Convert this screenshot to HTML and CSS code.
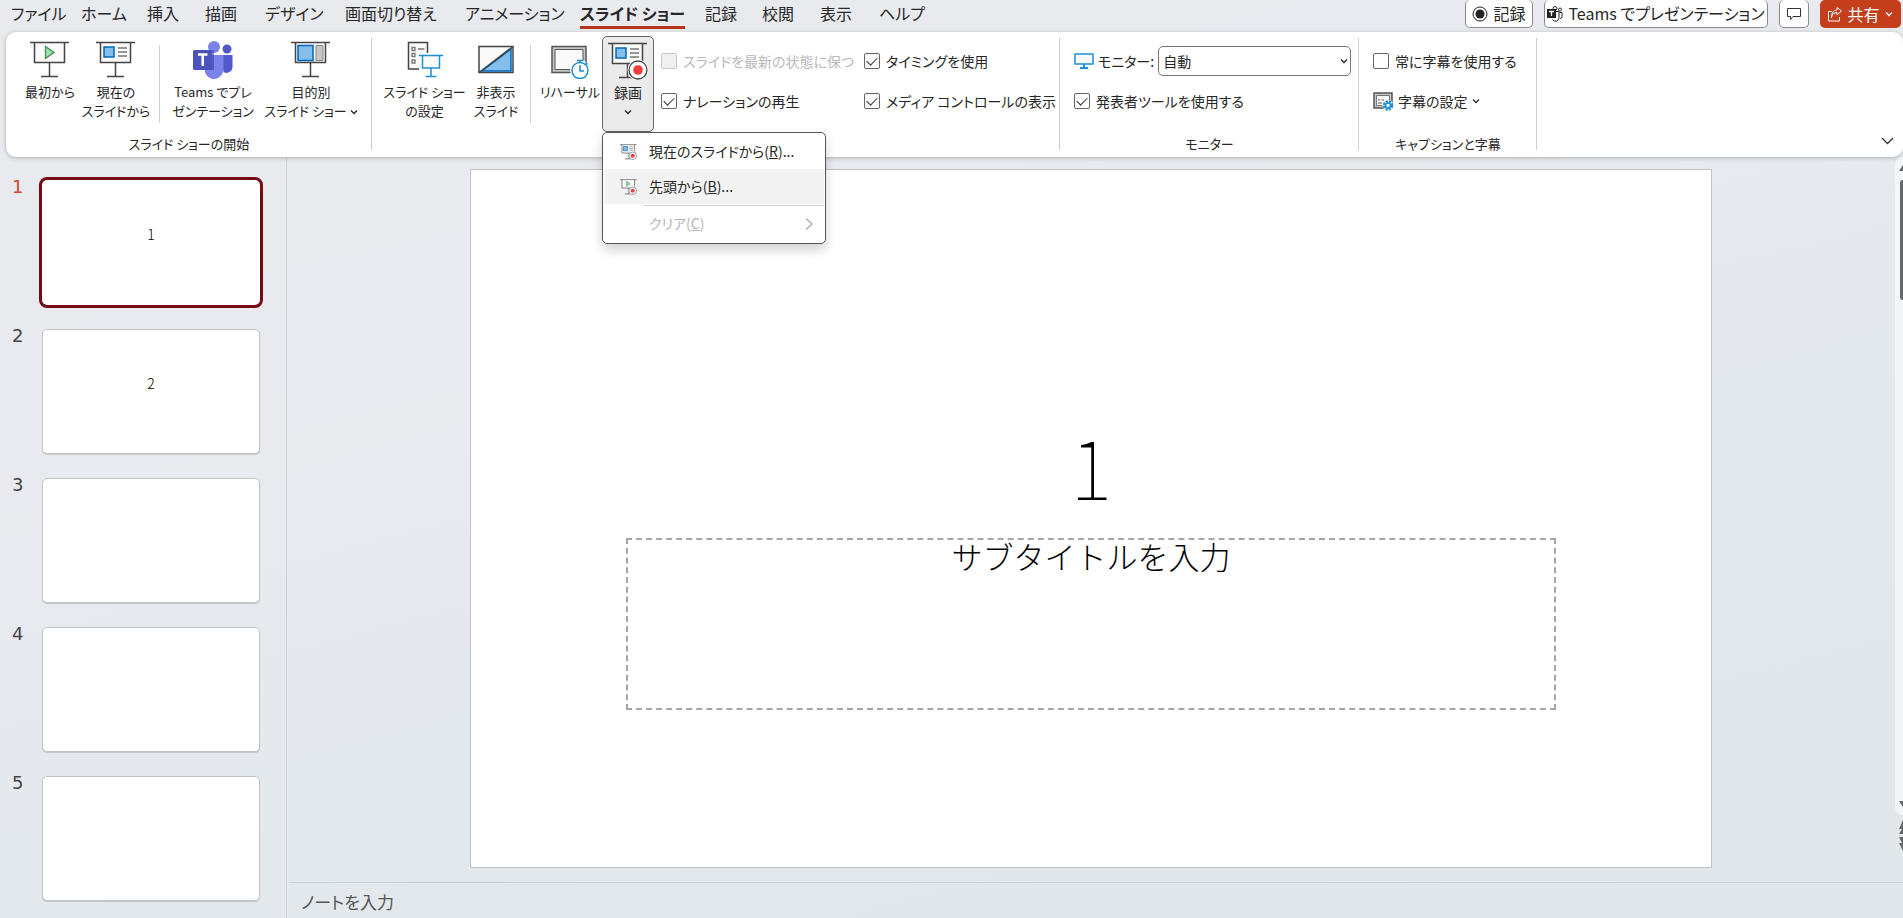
FILE: index.html
```
<!DOCTYPE html>
<html lang="ja">
<head>
    <meta charset="UTF-8">
    <meta name="viewport" content="width=device-width, initial-scale=1.0">
    <title>PowerPoint</title>
    <link rel="stylesheet" href="styles.css">
</head>
<body>
    <svg class="defs" aria-hidden="true">
        <symbol id="chevron" viewBox="0 0 8 8"><path d="M1 2.5l3 3 3-3" fill="none" stroke="currentColor" stroke-width="1.3"/></symbol>
        <symbol id="screen" viewBox="0 0 40 38">
            <path d="M5 2h30v20H5z" fill="#fafafa"/>
            <path d="M0 1.5h39M4.500 2v19.500h30V2M19.500 22v13.500M11 35.500h17" fill="none" stroke="#444" stroke-width="1.500"/>
        </symbol>
        <symbol id="content" viewBox="0 0 40 38">
            <path d="M8 6h10v10H8z" fill="#83beec" stroke="#0067b8" stroke-width="1.500"/>
            <path d="M22 7h9M22 11h9M22 15h9" stroke="#777" stroke-width="1.500"/>
        </symbol>
        <symbol id="play" viewBox="0 0 40 38"><path d="M15.500 5.500v12l8.500-6z" fill="#a1dbae" stroke="#3a9254" stroke-width="1.300"/></symbol>
        <symbol id="rec" viewBox="0 0 40 38">
            <circle cx="30" cy="28" r="10.500" fill="#fff"/>
            <circle cx="30" cy="28" r="9" fill="#fff" stroke="#444" stroke-width="1.300"/>
            <circle cx="30" cy="28" r="4.800" fill="#ee3d3b"/>
        </symbol>
    </svg>

    <header class="topbar">
        <nav class="tabs">
            <a href="#">ファイル</a>
            <a href="#">ホーム</a>
            <a href="#">挿入</a>
            <a href="#">描画</a>
            <a href="#">デザイン</a>
            <a href="#">画面切り替え</a>
            <a href="#">アニメーション</a>
            <a href="#" class="active">スライド ショー</a>
            <a href="#">記録</a>
            <a href="#">校閲</a>
            <a href="#">表示</a>
            <a href="#">ヘルプ</a>
        </nav>
        <div class="actions">
            <button class="record">
                <svg width="16" height="16" viewBox="0 0 16 16"><circle cx="8" cy="8" r="7" fill="none" stroke="#222"/><circle cx="8" cy="8" r="4.500" fill="#222"/></svg>
                記録
            </button>
            <button class="present">
                <svg width="16" height="16" viewBox="0 0 16 16">
                    <path d="M8.500 5.500h3.500v6a3.500 3.500 0 0 1-6.500 2M12.500 6.500H15v4a2 2 0 0 1-2 2" fill="none" stroke="#222"/>
                    <circle cx="8" cy="2.500" r="2" fill="none" stroke="#222"/><circle cx="13" cy="3.500" r="1.500" fill="none" stroke="#222"/>
                    <path d="M0 3h9v9H0z" fill="#222"/><path d="M2 5.500h5M4.500 5.500V10" stroke="#fff" stroke-width="1.300"/>
                </svg>
                Teams でプレゼンテーション
            </button>
            <button class="comment" aria-label="コメント">
                <svg width="14" height="14" viewBox="0 0 14 14"><path d="M.5 1.500h13v8H6L3.500 12.500v-3h-3z" fill="none" stroke="#333"/></svg>
            </button>
            <button class="share">
                <svg width="14" height="15" viewBox="0 0 14 15"><path d="M4 4.500H.5v9.500h11v-4M3.500 10.500c.5-3.500 2.500-5 5.500-5v2.500l4.500-4L9 .500V3C5.500 3 3.500 6 3.500 10.500z" fill="none" stroke="#fff"/></svg>
                共有
                <svg class="chev" width="8" height="8"><use href="#chevron"/></svg>
            </button>
        </div>
    </header>

    <section class="ribbon">
        <div class="group group-start">
            <div class="tools">
                <button class="tool">
                    <svg width="40" height="38"><use href="#screen"/><use href="#play"/></svg>
                    <span>最初から</span>
                </button>
                <button class="tool">
                    <svg width="40" height="38"><use href="#screen"/><use href="#content"/></svg>
                    <span>現在の<br>スライドから</span>
                </button>
                <div class="sep"></div>
                <button class="tool">
                    <svg width="40" height="38" viewBox="0 0 40 38">
                        <circle cx="34" cy="8" r="4.500" fill="#5059c9"/><path d="M28 14h11.500v11a6 6 0 0 1-9 6z" fill="#5059c9"/>
                        <circle cx="21" cy="6" r="6" fill="#7b83eb"/><path d="M12 14h18.500v13a9.500 10 0 0 1-19 2z" fill="#7b83eb"/>
                        <path d="M15 9h6v20h-9z" fill="#3d45a8" opacity=".6"/>
                        <rect y="9" width="19" height="20" rx="1.500" fill="#4b53bc"/>
                        <path d="M5 13.500h9.500M9.700 13.500V25" stroke="#fff" stroke-width="2.500"/>
                    </svg>
                    <span>Teams でプレ<br>ゼンテーション</span>
                </button>
                <button class="tool">
                    <svg width="40" height="38">
                        <use href="#screen"/>
                        <path d="M7 4.500h15v15H7z" fill="#83beec" stroke="#0067b8" stroke-width="1.500"/>
                        <path d="M25 4.500h7v15h-7z" fill="#c8c6c4" stroke="#888"/>
                    </svg>
                    <span>目的別<br>スライド ショー <svg class="chev" width="8" height="8"><use href="#chevron"/></svg></span>
                </button>
            </div>
            <h2>スライド ショーの開始</h2>
        </div>

        <div class="group group-setup">
            <div class="tools">
                <button class="tool">
                    <svg width="40" height="38" viewBox="0 0 40 38">
                        <path d="M3.500 1.500h19V28h-19z" fill="#fafafa"/>
                        <path d="M22.500 12V1.500h-19V28H14" fill="none" stroke="#444" stroke-width="1.500"/>
                        <path d="M7 6.500h3v3H7zM7 12.500h3v3H7zM7 19h3v3H7zM13 8h6.500" fill="none" stroke="#777" stroke-width="1.300"/>
                        <path d="M14 14h24v23H14z" fill="#fff"/>
                        <path d="M14 14.500h24M17.500 14.500v12.500h17V14.500M26 27v8.500M20.500 35.500h11" fill="#fafafa" stroke="#1e8fd6" stroke-width="1.500"/>
                    </svg>
                    <span>スライド ショー<br>の設定</span>
                </button>
                <button class="tool">
                    <svg width="40" height="38" viewBox="0 0 40 38">
                        <path d="M3 5.500h34v26H3z" fill="#fafafa" stroke="#444" stroke-width="1.500"/>
                        <path d="M6 30L35 8v22z" fill="#83beec" stroke="#0067b8" stroke-width="1.500"/>
                        <path d="M3 31.500L37 5.500" stroke="#444" stroke-width="1.500"/>
                    </svg>
                    <span>非表示<br>スライド</span>
                </button>
                <div class="sep"></div>
                <button class="tool">
                    <svg width="40" height="38" viewBox="0 0 40 38">
                        <path d="M2 5.500h34v26H2z" fill="#c8c6c4" stroke="#555" stroke-width="1.500"/>
                        <path d="M5 8.500h28v20H5z" fill="#fafafa" stroke="#555"/>
                        <circle cx="30" cy="29" r="10" fill="#fff"/>
                        <circle cx="30" cy="29.500" r="8" fill="#fff" stroke="#1e8fd6" stroke-width="1.500"/>
                        <path d="M30 24v6h4M27 19.500h6M30 19.500V22M35.500 21.500l2 2" fill="none" stroke="#1e8fd6" stroke-width="1.500"/>
                    </svg>
                    <span>リハーサル</span>
                </button>
                <div class="menu-holder">
                    <button class="tool open">
                        <svg width="40" height="38"><use href="#screen"/><use href="#content"/><use href="#rec"/></svg>
                        <span>録画</span>
                        <svg class="chev" width="8" height="8"><use href="#chevron"/></svg>
                    </button>
                    <div class="menu">
                        <button>
                            <svg width="17" height="16" viewBox="0 0 40 38"><use href="#screen"/><use href="#content"/><use href="#rec"/></svg>
                            <span>現在のスライドから(<u>R</u>)...</span>
                        </button>
                        <button class="hover">
                            <svg width="17" height="16" viewBox="0 0 40 38"><use href="#screen"/><use href="#play"/><use href="#rec"/></svg>
                            <span>先頭から(<u>B</u>)...</span>
                        </button>
                        <hr>
                        <button disabled>
                            <span>クリア(<u>C</u>)</span>
                            <svg class="arrow" width="8" height="12" viewBox="0 0 8 12"><path d="M1 .500l6 5.500-6 5.500" fill="none" stroke="#aaa" stroke-width="1.300"/></svg>
                        </button>
                    </div>
                </div>
                <div class="checks">
                    <label class="off"><input type="checkbox" disabled>スライドを最新の状態に保つ</label>
                    <label><input type="checkbox" checked>タイミングを使用</label>
                    <label><input type="checkbox" checked>ナレーションの再生</label>
                    <label><input type="checkbox" checked>メディア コントロールの表示</label>
                </div>
            </div>
        </div>

        <div class="group group-monitor">
            <div class="rows">
                <div class="row">
                    <svg width="20" height="16" viewBox="0 0 20 16"><path d="M1 1h18v10H1z" fill="#fafafa" stroke="#1e8fd6" stroke-width="1.500"/><path d="M10 11v4M6 15h8" stroke="#1e8fd6" stroke-width="2"/></svg>
                    <label for="monitor">モニター:</label>
                    <div class="select">
                        <select id="monitor"><option>自動</option></select>
                        <svg class="chev" width="8" height="8"><use href="#chevron"/></svg>
                    </div>
                </div>
                <label><input type="checkbox" checked>発表者ツールを使用する</label>
            </div>
            <h2>モニター</h2>
        </div>

        <div class="group group-caption">
            <div class="rows">
                <label><input type="checkbox">常に字幕を使用する</label>
                <button class="row">
                    <svg width="21" height="19" viewBox="0 0 21 19">
                        <path d="M1 1h18v15H1z" fill="#c8c6c4" stroke="#555" stroke-width="1.500"/><path d="M3.500 3.500h13v10h-13z" fill="#fafafa" stroke="#777"/>
                        <path d="M5 8h2M8.500 8H11M5 11h4" stroke="#555"/>
                        <circle cx="15" cy="13.500" r="5.500" fill="#fff"/>
                        <circle cx="15" cy="13.500" r="4" fill="none" stroke="#1e8fd6" stroke-width="2.500" stroke-dasharray="2.200 1"/>
                        <circle cx="15" cy="13.500" r="2.500" fill="#fff" stroke="#1e8fd6" stroke-width="1.500"/>
                    </svg>
                    字幕の設定
                    <svg class="chev" width="8" height="8"><use href="#chevron"/></svg>
                </button>
            </div>
            <h2>キャプションと字幕</h2>
        </div>

        <button class="collapse" aria-label="リボンを折りたたむ">
            <svg width="13" height="8" viewBox="0 0 13 8"><path d="M1 1l5.500 5.500L12 1" fill="none" stroke="#333" stroke-width="1.300"/></svg>
        </button>
    </section>

    <main class="workspace">
        <aside class="slides">
            <div class="slide-item selected"><span>1</span><div class="thumb">1</div></div>
            <div class="slide-item"><span>2</span><div class="thumb">2</div></div>
            <div class="slide-item"><span>3</span><div class="thumb"></div></div>
            <div class="slide-item"><span>4</span><div class="thumb"></div></div>
            <div class="slide-item"><span>5</span><div class="thumb"></div></div>
        </aside>
        <div class="editor">
            <div class="stage">
                <div class="canvas">
                    <div class="slide">
                        <h1>1</h1>
                        <div class="subtitle">サブタイトルを入力</div>
                    </div>
                </div>
                <div class="scroll">
                    <div class="track">
                        <svg width="8" height="8" viewBox="0 0 8 8"><path d="M4 7l4-6v6z" fill="#666"/></svg>
                        <div class="bar"></div>
                        <svg width="8" height="8" viewBox="0 0 8 8"><path d="M4 1h4v6z" fill="#666"/></svg>
                    </div>
                    <svg width="8" height="32" viewBox="0 0 8 32"><path d="M8 0v14H4l3-5H4zM4 17h4v14l-4-8h3z" fill="#666"/></svg>
                </div>
            </div>
            <div class="notes">ノートを入力</div>
        </div>
    </main>
</body>
</html>
```
FILE: styles.css
```
*{
    margin: 0;
    padding: 0;
    box-sizing: border-box;
}
body{
    display: flex;
    flex-direction: column;
    height: 100vh;
    overflow: hidden;
    background: linear-gradient(165deg, #e8eaee 0%, #e9eaef 30%, #e4e9ed 60%, #e0e6ea 100%);
    color: #262626;
    font-family: "Noto Sans CJK JP", sans-serif;
    font-feature-settings: "palt";
    font-size: 14px;
    line-height: 19px;
}
button, select{
    font: inherit;
    font-feature-settings: inherit;
    color: inherit;
    background: none;
    border: 0;
}
svg{
    flex: none;
}
.defs{
    position: absolute;
    width: 0;
    height: 0;
}

/* tabs */
.topbar{
    display: flex;
    justify-content: space-between;
    height: 32px;
    font-size: 16px;
    padding: 0 2px 0 11px;
}
.tabs{
    display: grid;
    grid-template-columns: 70px 66px 58px 60px 80px 120px 115px 125px 57px 58px 59px auto;
    justify-items: start;
    align-items: start;
}
.tabs a{
    color: inherit;
    text-decoration: none;
    white-space: nowrap;
    line-height: 26px;
}
.tabs .active{
    font-weight: bold;
    border-bottom: 3px solid #b83518;
}
.actions{
    display: flex;
    gap: 11px;
    height: 28px;
}
.actions button{
    display: flex;
    align-items: center;
    justify-content: center;
    gap: 5px;
    background: #fff;
    border: 1px solid #8a8a8a;
    border-top: 0;
    border-radius: 5px;
    white-space: nowrap;
}
.actions .record{
    width: 68px;
}
.actions .present{
    width: 224px;
}
.actions .comment{
    width: 30px;
}
.actions .share{
    width: 81px;
    background: #c43e1c;
    border: 0;
    color: #fff;
}

/* ribbon */
.ribbon{
    position: relative;
    z-index: 1;
    display: flex;
    height: 125px;
    margin-left: 6px;
    background: #fff;
    border-radius: 10px;
    box-shadow: 0 1px 4px rgba(0, 0, 0, 0.25);
}
.group{
    display: flex;
    flex-direction: column;
    justify-content: space-between;
    position: relative;
    padding-bottom: 4px;
}
.group::after{
    content: "";
    position: absolute;
    right: 0;
    top: 6px;
    bottom: 7px;
    width: 1px;
    background: #d0d0d0;
}
.group h2{
    font-size: 13px;
    font-weight: normal;
    text-align: center;
}
.group-start{
    width: 366px;
}
.group-setup{
    width: 688px;
}
.group-monitor{
    width: 299px;
}
.group-caption{
    width: 178px;
}
.tools{
    display: grid;
    justify-items: center;
    align-items: start;
}
.group-start .tools{
    grid-template-columns: 70px 62px 24px 84px 112px;
    padding-left: 9px;
}
.group-setup .tools{
    grid-template-columns: 105px 38px 30px 50px 66px 1fr;
    justify-content: start;
}
.tool{
    display: flex;
    flex-direction: column;
    align-items: center;
    gap: 3px;
    padding-top: 9px;
    font-size: 13px;
    white-space: nowrap;
}
.sep{
    width: 1px;
    height: 78px;
    margin-top: 13px;
    background: #d0d0d0;
}
.menu-holder{
    position: relative;
    padding-top: 4px;
}
.tool.open{
    width: 52px;
    height: 96px;
    padding-top: 5px;
    background: #ebebeb;
    border: 1px solid #666;
    border-radius: 5px;
    font-size: 14px;
}
.open .chev{
    margin-top: 3px;
}
.menu{
    position: absolute;
    left: 0;
    top: 100px;
    width: 224px;
    height: 112px;
    padding: 1px;
    background: #fff;
    border: 1px solid #555;
    border-radius: 5px;
    box-shadow: 0 6px 12px rgba(0, 0, 0, 0.18);
}
.menu button{
    display: flex;
    align-items: center;
    gap: 12px;
    width: 100%;
    height: 35px;
    padding-left: 16px;
    white-space: nowrap;
}
.menu .hover{
    background: #f3f3f3;
}
.menu hr{
    margin: 1px 0 0 40px;
    border: 0;
    border-top: 1px solid #d0d0d0;
}
.menu button:disabled{
    justify-content: space-between;
    padding: 0 11px 0 45px;
    color: #b5b5b5;
}
.checks{
    display: grid;
    grid-template-columns: 203px auto;
    row-gap: 20px;
    justify-self: start;
    padding-top: 19px;
}
label{
    display: flex;
    align-items: center;
    gap: 6px;
    height: 20px;
    white-space: nowrap;
}
.off{
    color: #b8b8b8;
}
input[type="checkbox"]{
    appearance: none;
    width: 16px;
    height: 16px;
    border: 1px solid #666;
    border-radius: 2px;
    background: #fff;
}
input:checked{
    display: grid;
    place-items: center;
}
input:checked::before{
    content: "";
    width: 9px;
    height: 5px;
    margin-bottom: 3px;
    border: solid #333;
    border-width: 0 0 1px 1px;
    transform: rotate(-45deg);
}
input[type="checkbox"]:disabled{
    background: #f0f0f0;
    border-color: #c8c8c8;
}
.rows{
    display: flex;
    flex-direction: column;
    gap: 20px;
    padding: 19px 10px 0 14px;
}
.row{
    display: flex;
    align-items: center;
    gap: 4px;
    height: 20px;
    white-space: nowrap;
}
.select{
    position: relative;
    flex: none;
    width: 193px;
    margin-left: auto;
}
.select select{
    appearance: none;
    display: block;
    width: 100%;
    height: 30px;
    padding-left: 4px;
    border: 1px solid #777;
    border-radius: 5px;
    background: #fff;
}
.select svg{
    position: absolute;
    right: 3px;
    top: 11px;
}
.collapse{
    align-self: flex-end;
    margin: 0 9px 12px auto;
    line-height: 10px;
}

/* workspace */
.workspace{
    flex: 1;
    display: flex;
    min-height: 0;
}
.slides{
    width: 287px;
    padding: 23px 0 0 12px;
    border-right: 1px solid #d0d2d5;
    overflow: hidden;
}
.slide-item{
    display: flex;
    height: 125px;
    margin-bottom: 24px;
}
.slide-item > span{
    width: 30px;
    color: #444;
    font-size: 18px;
    line-height: 14px;
    font-family: "DejaVu Sans", sans-serif;
}
.thumb{
    width: 218px;
    background: #fff;
    border: 1px solid #c3c3c3;
    border-radius: 5px;
    box-shadow: 0 1px 1px rgba(0, 0, 0, 0.15);
    color: #000;
    font-size: 14px;
    font-weight: 300;
    line-height: 106px;
    text-align: center;
}
.selected > span{
    color: #d24726;
}
.selected .thumb{
    border-color: #fff;
    outline: 3px solid #750b14;
}
.editor{
    flex: 1;
    display: flex;
    flex-direction: column;
    min-width: 0;
}
.stage{
    flex: 1;
    display: flex;
    min-height: 0;
}
.canvas{
    flex: 1;
    display: flex;
    justify-content: center;
    padding: 12px 0 14px;
}
.slide{
    height: 100%;
    aspect-ratio: 16 / 9;
    padding-top: 222px;
    background: #fff;
    border: 1px solid #c3c3c3;
    color: #000;
    font-weight: 300;
    text-align: center;
}
.slide h1{
    font-size: 80px;
    font-weight: 100;
    line-height: 146px;
}
.subtitle{
    width: 75%;
    height: 172px;
    margin: 0 auto;
    border: 2px dashed #a6a6a6;
    font-size: 31px;
    font-weight: 200;
    font-feature-settings: normal;
    line-height: 32px;
}
.scroll{
    display: flex;
    flex-direction: column;
    gap: 5px;
    width: 8px;
    padding-bottom: 30px;
}
.track{
    flex: 1;
    display: flex;
    flex-direction: column;
    padding: 7px 0;
    background: #f5f5f5;
    border-radius: 8px 0 0 8px;
}
.bar{
    width: 3px;
    height: 120px;
    margin: 8px 0 auto auto;
    background: #666;
    border-radius: 3px 0 0 3px;
}
.notes{
    height: 36px;
    margin-left: 2px;
    padding-left: 12px;
    border-top: 1px solid #cfd2d5;
    color: #555;
    font-size: 17px;
    line-height: 38px;
}
```
